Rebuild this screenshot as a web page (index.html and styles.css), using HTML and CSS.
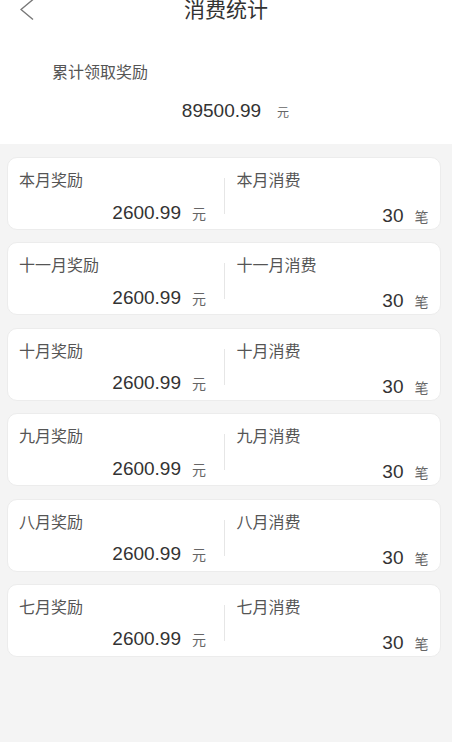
FILE: index.html
```html
<!DOCTYPE html>
<html lang="zh-CN">
<head>
<meta charset="utf-8">
<title>消费统计</title>
<link rel="stylesheet" href="styles.css">
</head>
<body>
<div class="summary">
  <div class="header">
    <div class="back">
      <svg width="14" height="22" viewBox="0 0 14 22"><polyline points="13,0.5 1,10.5 13,20.5" fill="none" stroke="#777" stroke-width="1.4"/></svg>
    </div>
    <div class="title">消费统计</div>
    <div></div>
  </div>
  <div class="total-label">累计领取奖励</div>
  <div class="total-amount">89500.99<span class="unit-sm">元</span></div>
</div>
<div class="list">
  <div class="card">
    <div class="cell left"><div class="label">本月奖励</div><div class="num">2600.99<span class="unit">元</span></div></div>
    <div class="divider"></div>
    <div class="cell right"><div class="label">本月消费</div><div class="num">30<span class="unit">笔</span></div></div>
  </div>
  <div class="card">
    <div class="cell left"><div class="label">十一月奖励</div><div class="num">2600.99<span class="unit">元</span></div></div>
    <div class="divider"></div>
    <div class="cell right"><div class="label">十一月消费</div><div class="num">30<span class="unit">笔</span></div></div>
  </div>
  <div class="card">
    <div class="cell left"><div class="label">十月奖励</div><div class="num">2600.99<span class="unit">元</span></div></div>
    <div class="divider"></div>
    <div class="cell right"><div class="label">十月消费</div><div class="num">30<span class="unit">笔</span></div></div>
  </div>
  <div class="card">
    <div class="cell left"><div class="label">九月奖励</div><div class="num">2600.99<span class="unit">元</span></div></div>
    <div class="divider"></div>
    <div class="cell right"><div class="label">九月消费</div><div class="num">30<span class="unit">笔</span></div></div>
  </div>
  <div class="card">
    <div class="cell left"><div class="label">八月奖励</div><div class="num">2600.99<span class="unit">元</span></div></div>
    <div class="divider"></div>
    <div class="cell right"><div class="label">八月消费</div><div class="num">30<span class="unit">笔</span></div></div>
  </div>
  <div class="card">
    <div class="cell left"><div class="label">七月奖励</div><div class="num">2600.99<span class="unit">元</span></div></div>
    <div class="divider"></div>
    <div class="cell right"><div class="label">七月消费</div><div class="num">30<span class="unit">笔</span></div></div>
  </div>
</div>
</body>
</html>
```
FILE: styles.css
```css
* { box-sizing: border-box; }
html, body {
  margin: 0;
  padding: 0;
  background: #f4f4f4;
  font-family: "Liberation Sans", "Noto Sans CJK SC", sans-serif;
  color: #333;
}
.summary {
  background: #fff;
  height: 144px;
}
.header {
  display: grid;
  grid-template-columns: 1fr auto 1fr;
  height: 17px;
  line-height: 17px;
}
.back {
  padding-left: 20px;
  margin-top: -1px;
  height: 17px;
  overflow: visible;
}
.back svg { display: block; }
.title {
  font-size: 21px;
  color: #333;
  font-family: "Noto Sans CJK SC", sans-serif;
}
.total-label {
  margin-top: 46px;
  padding-left: 52px;
  font-size: 16px;
  line-height: 16px;
  color: #555;
  font-family: "Noto Sans CJK SC", sans-serif;
}
.total-amount {
  margin-top: 22px;
  text-align: center;
  padding-left: 19px;
  font-size: 19px;
  line-height: 20px;
  color: #333;
}
.unit-sm {
  font-size: 12px;
  line-height: 12px;
  margin-left: 16px;
  color: #666;
  font-family: "Noto Sans CJK SC", sans-serif;
}
.list {
  padding: 13px 11px 0 7px;
  display: flex;
  flex-direction: column;
  gap: 12.4px;
}
.card {
  height: 73px;
  background: #fff;
  border: 1px solid #ececec;
  border-radius: 10px;
  display: grid;
  grid-template-columns: 1fr 1px 1fr;
}
.cell {
  padding-top: 13px;
  min-width: 0;
}
.cell.left { padding-left: 11px; padding-right: 17.5px; }
.cell.right { padding-left: 12px; padding-right: 11.5px; }
.label {
  font-size: 16px;
  line-height: 16px;
  color: #555;
  font-family: "Noto Sans CJK SC", sans-serif;
}
.num {
  text-align: right;
  font-size: 19px;
  line-height: 20px;
  color: #333;
}
.left .num { margin-top: 15.5px; }
.right .num { margin-top: 19px; }
.unit {
  font-size: 14px;
  line-height: 14px;
  margin-left: 11px;
  color: #666;
  font-family: "Noto Sans CJK SC", sans-serif;
}
.divider {
  background: #e6e6e6;
  margin-top: 20px;
  height: 36px;
}
```
